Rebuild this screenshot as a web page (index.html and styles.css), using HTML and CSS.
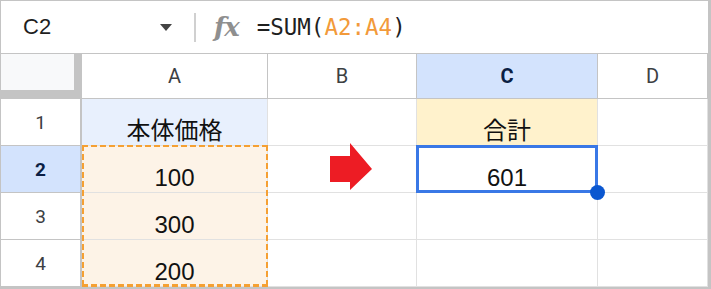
FILE: index.html
```html
<!DOCTYPE html>
<html lang="ja">
<head>
    <meta charset="UTF-8">
    <meta name="viewport" content="width=device-width, initial-scale=1.0">
    <title>SUM</title>
    <link rel="stylesheet" href="styles.css">
</head>
<body>
    <div class="sheet-app">
        <div class="formula-bar">
            <div class="name-box">
                <span class="cell-ref">C2</span>
                <span class="caret"></span>
            </div>
            <span class="divider"></span>
            <span class="fx">fx</span>
            <div class="formula">=SUM(<span class="range-ref">A2:A4</span>)</div>
        </div>

        <div class="grid">
            <div class="corner"></div>
            <div class="col-head">A</div>
            <div class="col-head">B</div>
            <div class="col-head active">C</div>
            <div class="col-head">D</div>

            <div class="row-head">1</div>
            <div class="cell label-blue">本体価格</div>
            <div class="cell"></div>
            <div class="cell label-yellow">合計</div>
            <div class="cell"></div>

            <div class="row-head active">2</div>
            <!-- 参照範囲 A2:A4 の点線は先頭セルに付ける -->
            <div class="cell source range-start">100</div>
            <div class="cell arrow-cell">
                <svg class="arrow" width="42" height="47" viewBox="0 0 42 47">
                    <polygon points="0,13 20,13 20,0 42,26 20,47 20,39 0,39" fill="#ed1c24"/>
                </svg>
            </div>
            <div class="cell selected">601<span class="fill-handle"></span></div>
            <div class="cell"></div>

            <div class="row-head">3</div>
            <div class="cell source">300</div>
            <div class="cell"></div>
            <div class="cell"></div>
            <div class="cell"></div>

            <div class="row-head">4</div>
            <div class="cell source">200</div>
            <div class="cell"></div>
            <div class="cell"></div>
            <div class="cell"></div>
        </div>
    </div>
</body>
</html>
```

FILE: styles.css
```css
body {
    margin: 0;
    background: #fff;
    font-family: 'Liberation Sans', 'Noto Sans CJK JP', sans-serif;
    color: #1f1f1f;
}

.sheet-app {
    width: 711px;
    height: 289px;
    box-sizing: border-box;
    border-top: 1px solid #c4c4c4;
    border-left: 1px solid #c4c4c4;
    border-right: 3px solid #c4c4c4;
    border-bottom: 2px solid #c4c4c4;
    overflow: hidden;
}

/* 数式バー */
.formula-bar {
    height: 53px;
    box-sizing: border-box;
    border-bottom: 1px solid #c4c4c4;
    display: flex;
    align-items: center;
    padding-left: 22px;
}

.name-box {
    width: 149px;
    display: flex;
    align-items: center;
    justify-content: space-between;
}

.cell-ref {
    font-size: 22px;
    color: #1f1f1f;
}

.caret {
    width: 0;
    height: 0;
    border-left: 6px solid transparent;
    border-right: 6px solid transparent;
    border-top: 7px solid #444;
}

.divider {
    width: 2px;
    height: 29px;
    background: #d0d0d0;
    margin-left: 22px;
}

.fx {
    margin-left: 18px;
    font-family: 'DejaVu Serif', serif;
    font-style: italic;
    font-weight: bold;
    font-size: 26px;
    color: #8f8f8f;
    letter-spacing: -1px;
}

.formula {
    margin-left: 18px;
    font-family: 'DejaVu Sans Mono', monospace;
    font-size: 22.5px;
    color: #1f1f1f;
}

.range-ref {
    color: #f29a3a;
}

/* シート */
.grid {
    display: grid;
    grid-template-columns: 81px 186px 149px 181px 110px;
    grid-template-rows: 45px repeat(4, 47px);
}

.grid > div {
    box-sizing: border-box;
}

.corner {
    background: #f8f9fa;
    border-bottom: 1px solid #c4c4c4;
    box-shadow: inset -8px -8px 0 #c4c4c4;
}

.col-head {
    display: flex;
    align-items: center;
    justify-content: center;
    font-family: Roboto, sans-serif;
    font-size: 20px;
    color: #3c4043;
    border-right: 1px solid #c4c4c4;
    border-bottom: 1px solid #c4c4c4;
}

.row-head {
    display: flex;
    align-items: center;
    justify-content: center;
    font-family: Roboto, sans-serif;
    font-size: 19px;
    color: #3c4043;
    border-right: 2px solid #c4c4c4;
    border-bottom: 1px solid #c4c4c4;
}

.col-head.active, .row-head.active {
    background: #d3e3fd;
    color: #0b1f44;
    font-weight: bold;
}

.cell {
    position: relative;
    display: flex;
    align-items: flex-end;
    justify-content: center;
    padding-bottom: 2px;
    font-size: 24px;
    line-height: 1;
    color: #111;
    border-right: 1px solid #e1e1e1;
    border-bottom: 1px solid #e1e1e1;
}

.label-blue {
    background: #e8f0fd;
}

.label-yellow {
    background: #fff2cc;
}

.source {
    background: #fdf3e7;
}

.range-start::after {
    content: '';
    position: absolute;
    top: -1px;
    left: 0;
    width: calc(100% + 1px);
    height: 142px;
    z-index: 1;
    pointer-events: none;
    background:
        repeating-linear-gradient(90deg, #f5a033 0 6px, transparent 6px 9px) top left / 100% 2px no-repeat,
        repeating-linear-gradient(90deg, #f5a033 0 6px, transparent 6px 9px) bottom left / 100% 3px no-repeat,
        repeating-linear-gradient(180deg, #f5a033 0 6px, transparent 6px 9px) top left / 2px 100% no-repeat,
        repeating-linear-gradient(180deg, #f5a033 0 6px, transparent 6px 9px) top right / 2px 100% no-repeat;
}

.arrow-cell {
    display: block;
    overflow: visible;
    padding: 0;
}

.arrow {
    display: block;
    margin: -3px 0 0 62px;
}

.selected::after {
    content: '';
    position: absolute;
    top: -1px;
    left: -1px;
    right: -1px;
    bottom: -1px;
    border: 3px solid #3978e6;
}

.fill-handle {
    position: absolute;
    right: -8px;
    bottom: -8px;
    width: 15px;
    height: 15px;
    border-radius: 50%;
    background: #0b57d0;
    z-index: 2;
}
```
